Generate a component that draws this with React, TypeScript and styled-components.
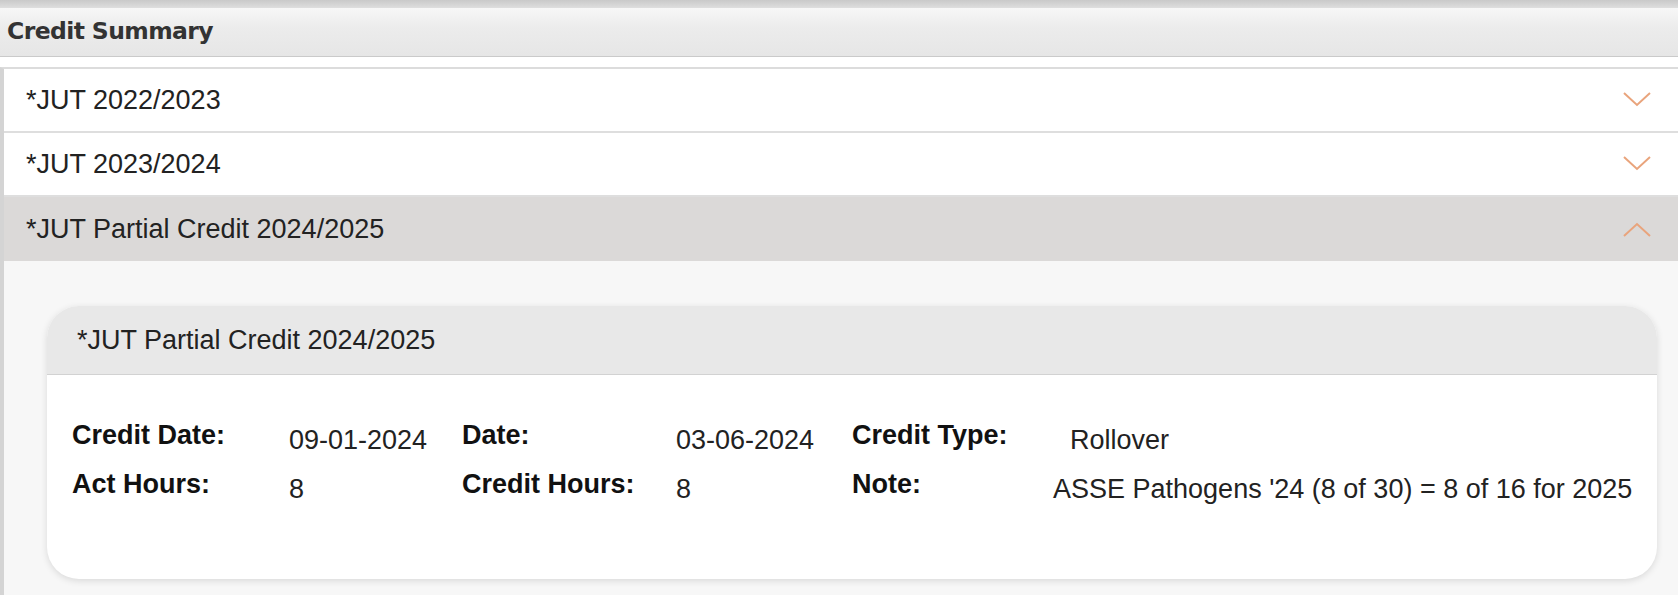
import * as React from 'react';
import styled, { createGlobalStyle } from 'styled-components';

const GlobalStyle = createGlobalStyle`
  html, body {
    margin: 0;
    padding: 0;
    background: #ffffff;
  }
  body {
    font-family: 'Liberation Sans', Arial, sans-serif;
    color: #222;
  }
`;

interface IField {
  label: string;
  value: string;
}

interface IRow {
  cols: string;
  fields: IField[];
}

const rows: IRow[] = [
  {
    cols: '217px 173px 214px 176px 218px 1fr',
    fields: [
      { label: 'Credit Date:', value: '09-01-2024' },
      { label: 'Date:', value: '03-06-2024' },
      { label: 'Credit Type:', value: 'Rollover' },
    ],
  },
  {
    cols: '217px 173px 214px 176px 201px 1fr',
    fields: [
      { label: 'Act Hours:', value: '8' },
      { label: 'Credit Hours:', value: '8' },
      { label: 'Note:', value: "ASSE Pathogens '24 (8 of 30) = 8 of 16 for 2025" },
    ],
  },
];

const sections = ['*JUT 2022/2023', '*JUT 2023/2024', '*JUT Partial Credit 2024/2025'];

const Chevron: React.FC<{ up?: boolean }> = ({ up }) => (
  <svg width="28" height="16" viewBox="0 0 28 16">
    <polyline
      points={up ? '1,15 14,3 27,15' : '1,1 14,13 27,1'}
      fill="none"
      stroke="#e9a47c"
      strokeWidth="2"
    />
  </svg>
);

const App: React.FC = () => {
  const openIndex = 2;
  return (
    <>
      <GlobalStyle />
      <Page>
        <TopStrip />
        <Header>Credit Summary</Header>
        <Accordion>
          {sections.map((title, i) => (
            <React.Fragment key={title}>
              <SectionRow active={i === openIndex}>
                <SectionTitle>{title}</SectionTitle>
                <Chevron up={i === openIndex} />
              </SectionRow>
              {i === openIndex && (
                <Content>
                  <Card>
                    <CardHeader>{title}</CardHeader>
                    <CardBody>
                      {rows.map((row, r) => (
                        <FieldRow key={r} cols={row.cols}>
                          {row.fields.map((f) => (
                            <React.Fragment key={f.label}>
                              <Label>{f.label}</Label>
                              <Value>{f.value}</Value>
                            </React.Fragment>
                          ))}
                        </FieldRow>
                      ))}
                    </CardBody>
                  </Card>
                </Content>
              )}
            </React.Fragment>
          ))}
        </Accordion>
      </Page>
    </>
  );
};

const Page = styled.div`
  width: 1678px;
  height: 595px;
  overflow: hidden;
  background: #fff;
`;

const TopStrip = styled.div`
  height: 8px;
  background: linear-gradient(#c9c9c9, #dedede);
`;

const Header = styled.div`
  height: 49px;
  box-sizing: border-box;
  padding-left: 7px;
  display: flex;
  align-items: center;
  padding-bottom: 2px;
  background: linear-gradient(#f7f7f7 0%, #ececec 40%, #e6e6e6 100%);
  border-bottom: 1px solid #cacaca;
  font-family: 'DejaVu Sans', Tahoma, sans-serif;
  font-weight: bold;
  font-size: 23.5px;
  letter-spacing: -0.6px;
  color: #333;
`;

const Accordion = styled.div`
  margin-top: 10px;
  border-top: 2px solid #dcdcdc;
  border-left: 4px solid #d4d4d4;
`;

const SectionRow = styled.div<{ active?: boolean }>`
  height: 64px;
  box-sizing: border-box;
  display: flex;
  align-items: center;
  justify-content: space-between;
  padding: 0 27px 0 22px;
  background: ${(p) => (p.active ? '#dbd9d8' : '#ffffff')};
  border-bottom: ${(p) => (p.active ? 'none' : '2px solid #dedede')};
`;

const SectionTitle = styled.div`
  font-size: 27px;
  color: #222;
`;

const Content = styled.div`
  background: #f7f7f7;
  padding: 45px 21px 40px 43px;
`;

const Card = styled.div`
  background: #fff;
  border-radius: 32px;
  overflow: hidden;
  box-shadow: 0 2px 7px rgba(0, 0, 0, 0.12);
`;

const CardHeader = styled.div`
  height: 69px;
  box-sizing: border-box;
  display: flex;
  align-items: center;
  padding-left: 30px;
  background: #e8e8e8;
  border-bottom: 1px solid #d2d2d2;
  font-size: 27px;
  color: #222;
`;

const CardBody = styled.div`
  display: flex;
  flex-direction: column;
  gap: 12px;
  padding: 44px 25px 74px 25px;
`;

const FieldRow = styled.div<{ cols: string }>`
  display: grid;
  grid-template-columns: ${(p) => p.cols};
  align-items: start;
  line-height: 32px;
`;

const Label = styled.div`
  font-size: 27px;
  font-weight: bold;
  color: #111;
  white-space: nowrap;
`;

const Value = styled.div`
  font-size: 27px;
  color: #222;
  padding-top: 5px;
  white-space: nowrap;
`;

export default App;
